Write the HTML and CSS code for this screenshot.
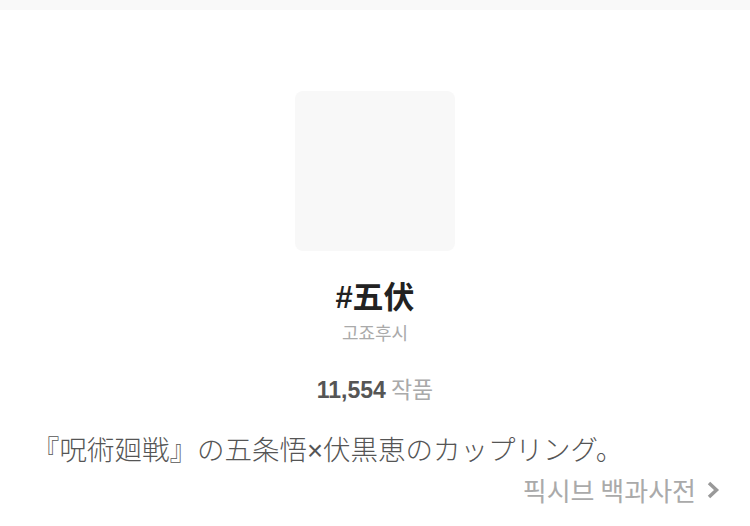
FILE: index.html
```html
<!DOCTYPE html>
<html>
<head>
  <title>#五伏</title>
  <meta charset="UTF-8">
  <link rel="stylesheet" href="styles.css">
</head>
<body>
  <div class="topbar"></div>
  <div class="tag-page">
    <div class="tag-head">
      <div class="thumb"></div>
      <div class="tag-name">#五伏</div>
      <div class="tag-reading">고죠후시</div>
      <div class="tag-count"><span class="count-num">11,554</span> <span class="count-label">작품</span></div>
    </div>
    <p class="tag-desc">『呪術廻戦』の五条悟×伏黒恵のカップリング。</p>
    <div class="dic-link">
      <span>픽시브 백과사전</span>
      <svg class="chevron" width="14" height="20" viewBox="0 0 14 20">
        <path d="M3 3 L10.5 10 L3 17" fill="none" stroke="#999" stroke-width="3.5"/>
      </svg>
    </div>
  </div>
</body>
</html>
```

FILE: styles.css
```css
body {
  margin: 0;
  font-family: "Noto Sans CJK JP", "Noto Sans CJK KR", sans-serif;
  color: #333;
  background: white;
}

.topbar {
  height: 10px;
  background: #f9f9f9;
}

.tag-page {
  padding: 0 30px 0 32px;
}

.tag-head {
  display: flex;
  flex-direction: column;
  align-items: center;
  padding-top: 81px;
  margin-right: 2px;
}

.thumb {
  width: 160px;
  height: 160px;
  border-radius: 8px;
  background: #f8f8f8;
}

.tag-name {
  margin-top: 27px;
  font-family: "Liberation Sans", "Noto Sans CJK JP", sans-serif;
  font-size: 31px;
  font-weight: 700;
  line-height: 40px;
  color: #222;
}

.tag-reading {
  margin-top: 2px;
  font-family: "Noto Sans CJK KR", sans-serif;
  font-size: 18px;
  line-height: 24px;
  color: #aaa;
}

.tag-count {
  margin-top: 30px;
  font-size: 23px;
  line-height: 28px;
}

.count-num {
  font-family: "Liberation Sans", sans-serif;
  font-weight: 700;
  color: #555;
}

.count-label {
  font-family: "Noto Sans CJK KR", sans-serif;
  color: #aaa;
}

.tag-desc {
  margin: 29px 0 0;
  font-family: "Liberation Sans", "Noto Sans CJK JP", sans-serif;
  font-size: 27.5px;
  font-weight: 300;
  line-height: 36px;
  color: #555;
}

.dic-link {
  display: flex;
  justify-content: flex-end;
  align-items: center;
  gap: 10px;
  margin-top: 4px;
  font-family: "Noto Sans CJK KR", sans-serif;
  font-size: 26px;
  line-height: 34px;
  color: #aaa;
}
```
